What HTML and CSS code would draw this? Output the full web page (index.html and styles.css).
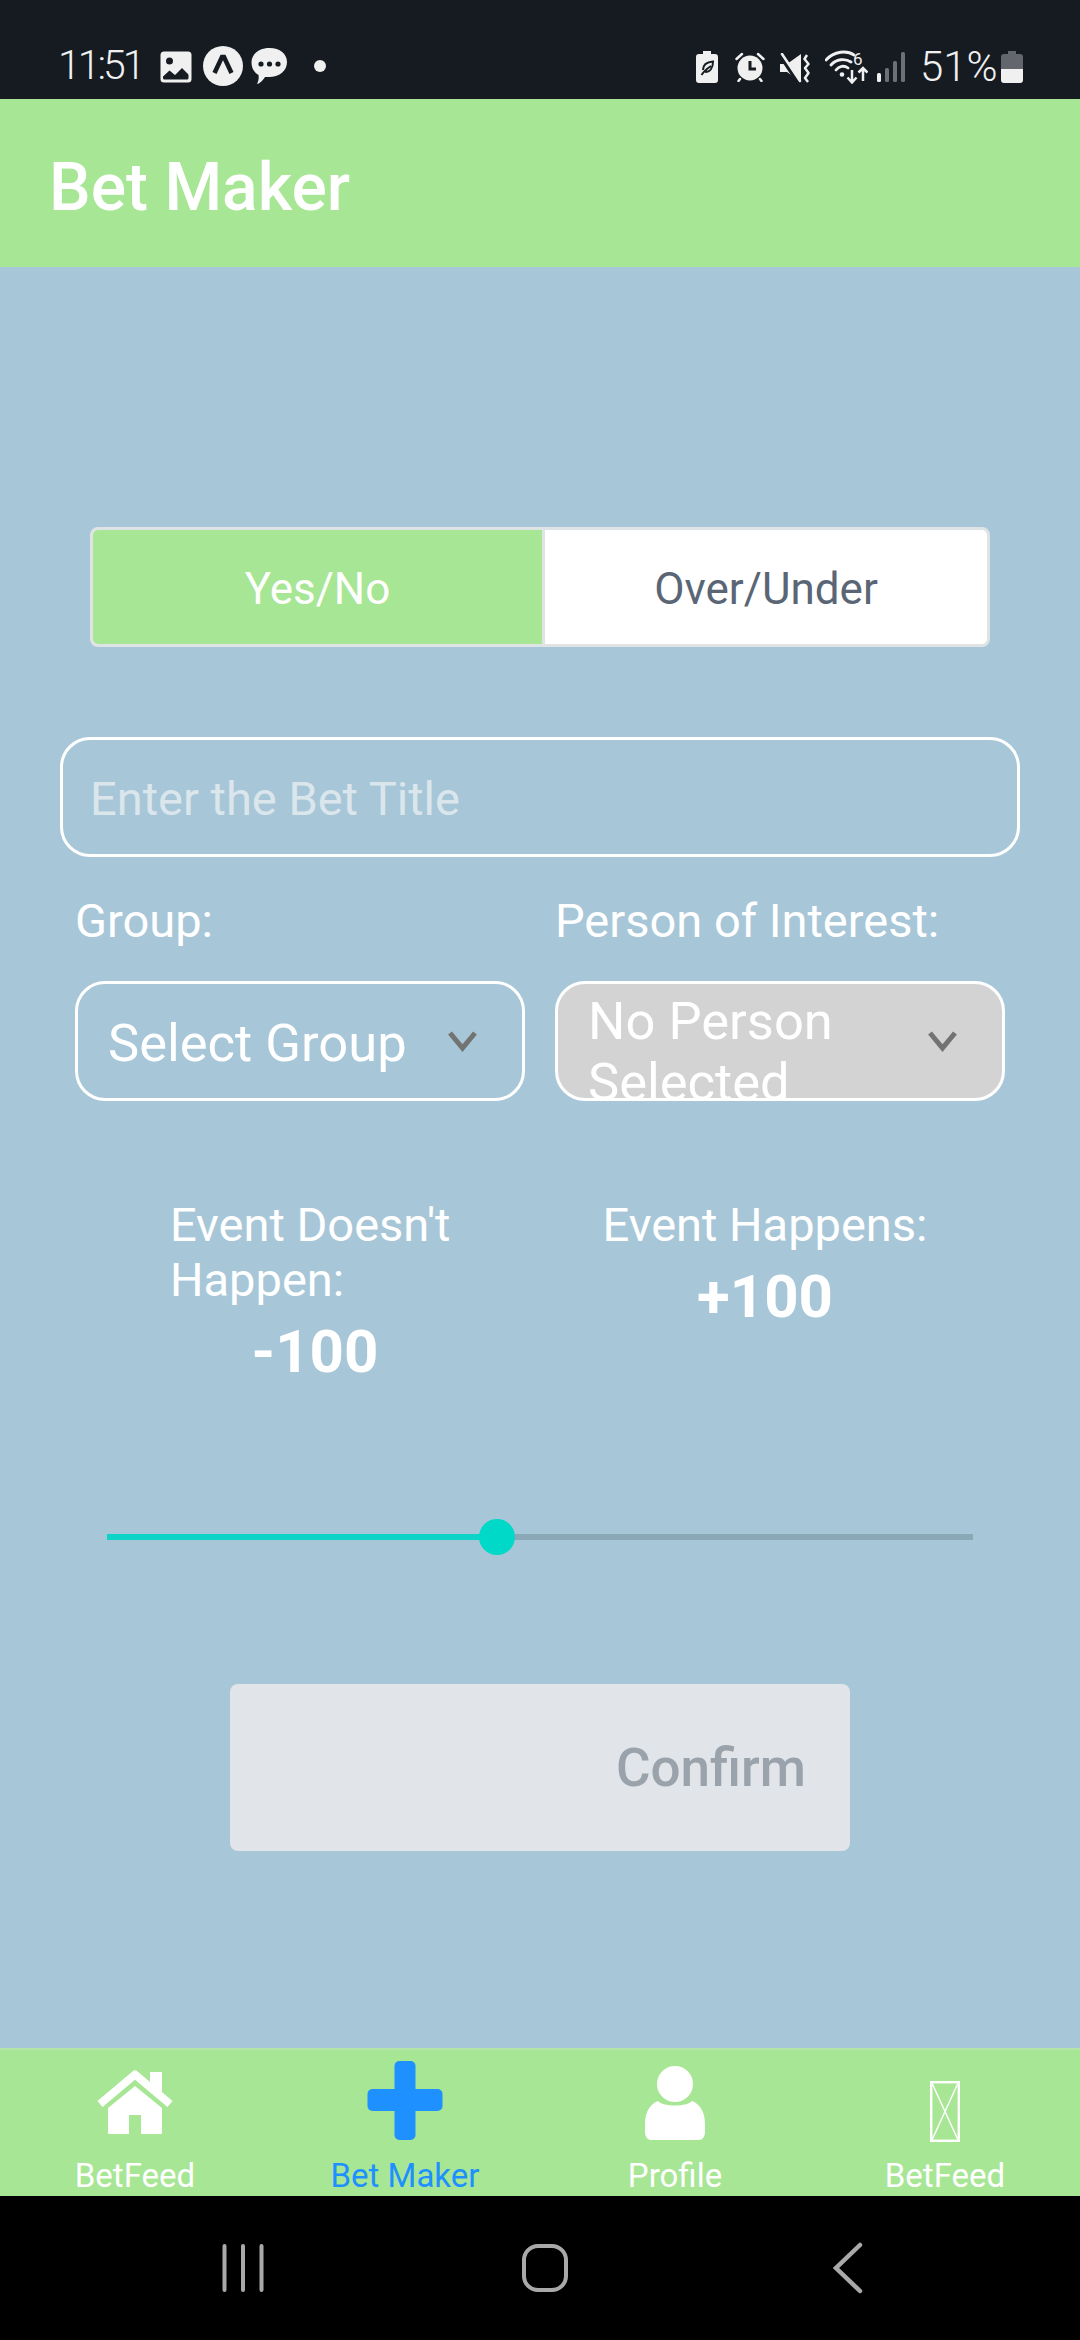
FILE: index.html
```html
<!DOCTYPE html>
<html lang="en">
<head>
  <meta charset="UTF-8" />
  <meta name="viewport" content="width=device-width, initial-scale=1.0"/>
  <title>Bet Maker</title>
  <link rel="stylesheet" href="styles.css">
</head>
<body>
  <div class="app">

    <div class="status-bar">
      <div class="status-left">
        <span class="time">11:51</span>
        <svg class="ic-image" width="32" height="32" viewBox="0 0 32 32">
          <rect x="0.5" y="0.5" width="31" height="31" rx="3.5" fill="#f0f0f0"/>
          <circle cx="9.5" cy="10" r="3.5" fill="#161b22"/>
          <path d="M3 25 L10 17.5 L15 21.5 L22 14 L28.5 21 V27 a1.5 1.5 0 0 1 -1.5 1.5 H4.5 A1.5 1.5 0 0 1 3 27 Z" fill="#161b22"/>
          <path d="M3 22 L9.5 15.5 L15 20 L22 12.5 L29 19.5 V24 L22 17 L15 24 L9.5 19.5 L3 25.5 Z" fill="#f0f0f0"/>
        </svg>
        <svg class="ic-expo" width="40" height="40" viewBox="0 0 40 40">
          <circle cx="20" cy="20" r="20" fill="#f0f0f0"/>
          <path d="M11.5 27 L19 11 H21 L28.500 27" fill="none" stroke="#161b22" stroke-width="4.500"/>
        </svg>
        <svg class="ic-chat" width="37" height="37" viewBox="0 0 37 37">
          <path d="M18.500 0 C29 0 36 6 36 14 C36 23 28 29 18 29 L14 29 C11.500 33 8 36 6 36 C7.500 33 8 30 7.500 27 C3 24.500 0.500 20 0.500 14.500 C0.500 6 8 0 18.500 0 Z" fill="#f0f0f0"/>
          <circle cx="10" cy="16" r="2.600" fill="#161b22"/>
          <circle cx="18.500" cy="16" r="2.600" fill="#161b22"/>
          <circle cx="27" cy="16" r="2.600" fill="#161b22"/>
        </svg>
        <span class="notif-dot"></span>
      </div>
      <div class="status-right">
        <svg class="ic-saver" width="22" height="32" viewBox="0 0 22 32">
          <path d="M7 0 H15 V3 H19 a3 3 0 0 1 3 3 V29 a3 3 0 0 1 -3 3 H3 a3 3 0 0 1 -3 -3 V6 a3 3 0 0 1 3 -3 H7 Z" fill="#f0f0f0"/>
          <path d="M5.500 24 C8 20 12 17 15 15 M7 19 C7 14 11 11 17 10.500 C17 17 14 21 9 21" fill="none" stroke="#161b22" stroke-width="2"/>
        </svg>
        <svg class="ic-alarm" width="30" height="30" viewBox="0 0 30 30">
          <circle cx="15" cy="16" r="12.500" fill="#f0f0f0"/>
          <path d="M15 9 V17 H21" fill="none" stroke="#161b22" stroke-width="3"/>
          <path d="M1.500 7 L7 2 M28.500 7 L23 2 M5 27 L3.500 29 M25 27 L26.500 29" fill="none" stroke="#f0f0f0" stroke-width="2.500" stroke-linecap="round"/>
        </svg>
        <svg class="ic-mute" width="30" height="30" viewBox="0 0 30 30">
          <path d="M0 11 H7 L21 1 V29 L7 19 H0 Z" fill="#f0f0f0"/>
          <path d="M0 1 L19 30" stroke="#161b22" stroke-width="5"/>
          <path d="M2 1 L20 28" stroke="#f0f0f0" stroke-width="2.500" stroke-linecap="round"/>
          <path d="M27 2 L24.500 6 L28.500 11 L25 15 L28.500 20 L25 25 L28 29" fill="none" stroke="#f0f0f0" stroke-width="2.500" stroke-linejoin="round"/>
        </svg>
        <svg class="ic-wifi" width="43" height="34" viewBox="0 0 43 34">
          <path d="M1 10 C9 1 22 0 29 5 M6 15 C11 9 20 8 26 12 M11 20 C14 16 19 15 23 18" fill="none" stroke="#f0f0f0" stroke-width="2.800" stroke-linecap="round"/>
          <circle cx="17" cy="24.500" r="2.300" fill="#f0f0f0"/>
          <text class="wifi-six" x="28" y="15">6</text>
          <path d="M27 20 V32 M22.500 27.500 L27 32.500 L31.500 27.500 M38 31 V18 M33.500 22.500 L38 18 L42.500 22.500" fill="none" stroke="#f0f0f0" stroke-width="2.500"/>
        </svg>
        <svg class="ic-signal" width="28" height="30" viewBox="0 0 28 30">
          <rect x="0" y="21" width="4" height="9" rx="1.500" fill="#f0f0f0"/>
          <rect x="8" y="16" width="4" height="14" rx="1.500" fill="#6c7075"/>
          <rect x="16" y="9" width="4" height="21" rx="1.500" fill="#6c7075"/>
          <rect x="24" y="0" width="4" height="30" rx="1.500" fill="#6c7075"/>
        </svg>
        <span class="battery-pct">51%</span>
        <svg class="ic-battery" width="22" height="32" viewBox="0 0 22 32">
          <path d="M7 0 H15 V3 H19 a3 3 0 0 1 3 3 V18 H0 V6 a3 3 0 0 1 3 -3 H7 Z" fill="#63676d"/>
          <path d="M0 18 H22 V29 a3 3 0 0 1 -3 3 H3 a3 3 0 0 1 -3 -3 Z" fill="#f0f0f0"/>
        </svg>
      </div>
    </div>

    <div class="app-header">
      <h1>Bet Maker</h1>
    </div>

    <div class="content">
      <div class="segment">
        <div class="segment-btn active">Yes/No</div>
        <div class="segment-btn">Over/Under</div>
      </div>

      <div class="title-input">Enter the Bet Title</div>

      <div class="picker-row">
        <div class="picker-col">
          <div class="picker-label">Group:</div>
          <div class="picker">
            <div class="picker-text">Select Group</div>
            <svg class="chevron" width="31" height="30" viewBox="0 0 31 30"><path d="M3 7 L15.500 22 L28 7" fill="none" stroke="#737373" stroke-width="5"/></svg>
          </div>
        </div>
        <div class="picker-col">
          <div class="picker-label">Person of Interest:</div>
          <div class="picker disabled">
            <div class="picker-text">No Person Selected</div>
            <svg class="chevron" width="31" height="30" viewBox="0 0 31 30"><path d="M3 7 L15.500 22 L28 7" fill="none" stroke="#737373" stroke-width="5"/></svg>
          </div>
        </div>
      </div>

      <div class="odds-row">
        <div class="odds-col">
          <div class="odds-label">Event Doesn't Happen:</div>
          <div class="odds-value">-100</div>
        </div>
        <div class="odds-col">
          <div class="odds-label">Event Happens:</div>
          <div class="odds-value">+100</div>
        </div>
      </div>

      <div class="slider">
        <div class="slider-fill" style="width:45%"></div>
        <div class="slider-thumb" style="left:45%"></div>
      </div>

      <div class="confirm-btn">Confirm</div>
    </div>

    <div class="tab-bar">
      <div class="tab">
        <svg width="90" height="84" viewBox="0 0 90 84">
          <path d="M10 44 L45 14.500 L80 44" fill="none" stroke="#fff" stroke-width="8" stroke-linejoin="round"/>
          <path d="M60 12 H72 V34 L60 24 Z" fill="#fff"/>
          <path d="M45 26 L72 48 V73 a1 1 0 0 1 -1 1 H51 V55 H39 V74 H19 a1 1 0 0 1 -1 -1 V48 Z" fill="#fff"/>
        </svg>
        <span class="tab-label">BetFeed</span>
      </div>
      <div class="tab active">
        <svg width="90" height="84" viewBox="0 0 90 84">
          <rect x="34.500" y="1" width="21" height="79" rx="5" fill="#1e90ff"/>
          <rect x="7.500" y="29" width="75" height="22" rx="5" fill="#1e90ff"/>
        </svg>
        <span class="tab-label">Bet Maker</span>
      </div>
      <div class="tab">
        <svg width="90" height="84" viewBox="0 0 90 84">
          <circle cx="45" cy="24" r="18" fill="#fff"/>
          <path d="M28 41 C33 47 57 47 62 41 C70 44 75 52 75 64 V72 C75 77 72 80 69 80 H21 C18 80 15 77 15 72 V64 C15 52 20 44 28 41 Z" fill="#fff"/>
        </svg>
        <span class="tab-label">Profile</span>
      </div>
      <div class="tab">
        <svg width="90" height="84" viewBox="0 0 90 84">
          <rect x="31.200" y="22.200" width="27.600" height="58.600" fill="none" stroke="#fff" stroke-width="2.400"/>
          <path d="M31.500 22 L58.500 81 M58.500 22 L31.500 81" fill="none" stroke="#fff" stroke-width="1.500"/>
        </svg>
        <span class="tab-label">BetFeed</span>
      </div>
    </div>

    <div class="nav-bar">
      <svg width="44" height="48" viewBox="0 0 44 48">
        <path d="M3.500 2 V46 M22 2 V46 M40.500 2 V46" fill="none" stroke="#a9a9a9" stroke-width="4" stroke-linecap="round"/>
      </svg>
      <svg width="46" height="48" viewBox="0 0 46 48">
        <rect x="2" y="2" width="42" height="44" rx="14" fill="none" stroke="#a9a9a9" stroke-width="4"/>
      </svg>
      <svg width="30" height="52" viewBox="0 0 30 52">
        <path d="M27 3 L3 26 L27 49" fill="none" stroke="#a9a9a9" stroke-width="4.500" stroke-linecap="round"/>
      </svg>
    </div>

  </div>
</body>
</html>
```
FILE: styles.css
```css
* {
  box-sizing: border-box;
}

body {
  margin: 0;
  font-family: Roboto, 'Noto Sans', sans-serif;
  background: #000;
}

.app {
  width: 1080px;
  height: 2340px;
  display: flex;
  flex-direction: column;
  overflow: hidden;
}

/* status bar */
.status-bar {
  height: 99px;
  flex: none;
  background: #161b22;
  color: #f0f0f0;
  display: flex;
  justify-content: space-between;
  padding: 46px 57px 0 58px;
}

.status-left,
.status-right {
  display: flex;
  align-items: flex-start;
}

.time {
  font-size: 41px;
  font-weight: 300;
  line-height: 38px;
  width: 102px;
  letter-spacing: -3px;
}

.ic-image { margin-top: 5px; }
.ic-expo { margin-left: 11px; }
.ic-chat { margin: 2px 0 0 8px; }

.notif-dot {
  width: 12px;
  height: 12px;
  border-radius: 50%;
  background: #f0f0f0;
  margin: 14px 0 0 26px;
}

.ic-saver { margin-top: 5px; }
.ic-alarm { margin: 6px 0 0 17px; }
.ic-mute { margin: 7px 0 0 15px; }
.ic-wifi { margin: 4px 0 0 15px; }
.ic-signal { margin: 6px 0 0 9px; }
.ic-battery { margin: 5px 0 0 8px; }

.wifi-six {
  font-family: Roboto, sans-serif;
  font-size: 17px;
  fill: #f0f0f0;
}

.battery-pct {
  font-size: 42px;
  font-weight: 300;
  line-height: 38px;
  margin: 2px 0 0 15px;
  width: 73px;
  white-space: nowrap;
}

/* header */
.app-header {
  height: 168px;
  flex: none;
  background: #a7e694;
  display: flex;
  align-items: center;
  padding: 9px 0 0 49px;
}

.app-header h1 {
  margin: 0;
  color: #fff;
  font-size: 66px;
  font-weight: 500;
}

/* main area */
.content {
  flex: 1;
  background: #a7c7d8;
  padding: 260px 60px 0;
  display: flex;
  flex-direction: column;
}

.segment {
  width: 900px;
  height: 120px;
  margin: 0 auto;
  display: flex;
  border: 3px solid #dfe3e6;
  border-radius: 8px;
  overflow: hidden;
  background: #fff;
}

.segment-btn {
  flex: 1;
  display: flex;
  align-items: center;
  justify-content: center;
  font-size: 44px;
  padding-top: 3px;
  color: #5a6675;
}

.segment-btn.active {
  flex: none;
  width: 452px;
  background: #a7e694;
  color: #fff;
  border-right: 3px solid #dfe3e6;
}

.title-input {
  height: 120px;
  margin-top: 90px;
  border: 3px solid #fff;
  border-radius: 30px;
  padding: 2px 0 0 27px;
  display: flex;
  align-items: center;
  font-size: 47px;
  color: #dbe6ec;
}

.picker-row {
  display: flex;
  justify-content: space-between;
  padding: 0 15px;
}

.picker-col {
  width: 450px;
}

.picker-label {
  color: #fff;
  font-size: 47px;
  line-height: 50px;
  margin-top: 39px;
}

.picker {
  height: 120px;
  margin-top: 35px;
  border: 3px solid #fff;
  border-radius: 30px;
  padding: 0 44px 0 30px;
  display: flex;
  align-items: center;
  justify-content: space-between;
  overflow: hidden;
}

.picker.disabled {
  background: #d3d3d3;
}

.picker-text {
  width: 330px;
  margin-top: 4px;
  color: #fff;
  font-size: 52.5px;
  line-height: 61px;
}

.picker.disabled .picker-text {
  margin-top: 22px;
}

.chevron {
  flex: none;
}

.odds-row {
  display: flex;
  padding: 96px 30px 0;
  height: 433px;
}

.odds-col {
  flex: 1;
  display: flex;
  flex-direction: column;
  align-items: center;
}

.odds-label {
  width: 290px;
  color: #fff;
  font-size: 47px;
  line-height: 55px;
}

.odds-col:last-child .odds-label {
  width: auto;
}

.odds-value {
  color: #fff;
  font-size: 60px;
  font-weight: 700;
  line-height: 70px;
  margin-top: 10px;
}

.slider {
  position: relative;
  width: 866px;
  height: 6px;
  margin-left: 47px;
  background: #8aa8b6;
}

.slider-fill {
  height: 6px;
  background: #0dd4c6;
}

.slider-thumb {
  position: absolute;
  top: -15px;
  width: 36px;
  height: 36px;
  margin-left: -18px;
  border-radius: 50%;
  background: #00d9c8;
}

.confirm-btn {
  width: 620px;
  height: 167px;
  margin: 144px 0 0 170px;
  background: #e1e5e9;
  border-radius: 8px;
  display: flex;
  align-items: center;
  justify-content: flex-end;
  padding-right: 44px;
  font-size: 53px;
  font-weight: 500;
  color: #9aa3ab;
}

/* bottom tabs */
.tab-bar {
  height: 148px;
  flex: none;
  background: #a7e694;
  border-top: 2px solid #b4e4a6;
  display: flex;
  padding-top: 10px;
}

.tab {
  flex: 1;
  display: flex;
  flex-direction: column;
  align-items: center;
  color: #fff;
}

.tab.active {
  color: #1e90ff;
}

.tab-label {
  font-size: 33px;
  line-height: 36px;
  margin-top: 14px;
}

.nav-bar {
  height: 144px;
  flex: none;
  background: #000;
  display: grid;
  grid-template-columns: repeat(3, 1fr);
  justify-items: center;
  align-items: center;
  padding: 0 81px 0 92px;
}
```
